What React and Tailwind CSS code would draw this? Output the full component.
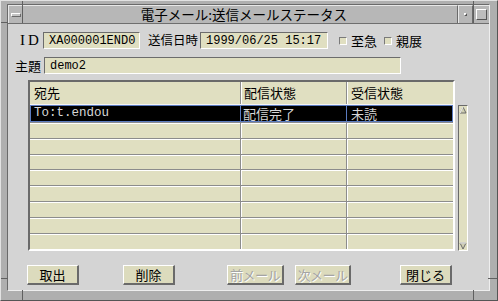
import React from "react";

const jp = "font-['Noto_Sans_CJK_JP',sans-serif]";
const mono = "font-['Liberation_Mono','Noto_Sans_CJK_JP',monospace]";

const rows = [
  { to: "To:t.endou", sent: "配信完了", read: "未読", selected: true },
  {}, {}, {}, {}, {}, {}, {}, {},
];

const Field = ({ className, children }) => (
  <div
    className={`h-[17px] bg-[#e0dfc1] border border-t-[#6c6c6c] border-l-[#6c6c6c] border-b-white border-r-white flex items-center pl-[5px] text-[12px] text-black whitespace-nowrap ${mono} ${className}`}
  >
    {children}
  </div>
);

const Check = () => (
  <div className="w-[8px] h-[8px] bg-[#e0dfc1] border border-t-[#7a7a7a] border-l-[#7a7a7a] border-b-white border-r-white" />
);

const Button = ({ className, disabled, children }) => (
  <div
    className={`h-[20px] bg-[#dcdbbd] border-t border-l border-t-white border-l-white border-b-2 border-r-2 border-b-[#6a6a6a] border-r-[#6a6a6a] flex items-center justify-center text-[13px] leading-none whitespace-nowrap ${jp} ${
      disabled ? "text-[#a4a4a4] [text-shadow:1px_1px_0_#ffffff] tracking-[-0.5px]" : "text-black"
    } ${className}`}
  >
    {children}
  </div>
);

export default function App() {
  return (
    <div className="relative w-[498px] h-[301px] bg-[#afafaf] border-t border-l border-t-[#e2e2e2] border-l-[#e2e2e2] border-b border-r border-b-[#555555] border-r-[#555555] pt-[3px] pl-[6px] pr-[7px] pb-[9px] overflow-hidden">
      {/* resize corner marks */}
      <div className="absolute left-[21px] top-0 w-px h-[22px] bg-[#606060]" />
      <div className="absolute left-0 top-[21px] w-[7px] h-px bg-[#606060]" />
      <div className="absolute left-[472px] top-0 w-px h-[22px] bg-[#606060]" />
      <div className="absolute left-[21px] bottom-0 w-px h-[10px] bg-[#606060]" />
      <div className="absolute left-0 top-[277px] w-[7px] h-px bg-[#606060]" />
      <div className="absolute left-[472px] bottom-0 w-px h-[10px] bg-[#606060]" />
      <div className="absolute right-0 top-[277px] w-[9px] h-px bg-[#606060]" />

      <div className="flex flex-col border border-t-[#6a6a6a] border-l-[#6a6a6a] border-b-[#eeeeee] border-r-[#eeeeee]">
        {/* title bar */}
        <div className="h-[19px] flex bg-[#b7b7b7] border-b border-b-[#6e6e6e]">
          <div className="w-[15px] h-full flex items-center justify-center border-t border-l border-t-[#e8e8e8] border-l-[#e8e8e8] border-r border-r-[#6a6a6a]">
            <div className="w-[10px] h-[4px] bg-[#c4c4c4] border-t border-l border-t-white border-l-white border-b border-r border-b-[#6a6a6a] border-r-[#6a6a6a]" />
          </div>
          <div
            className={`flex-1 h-full flex items-center justify-center pl-[8px] text-[13.5px] leading-none text-black whitespace-nowrap border-t border-t-[#e8e8e8] border-r border-r-[#6a6a6a] ${jp}`}
          >
            電子メール:送信メールステータス
          </div>
          <div className="w-[15px] h-full flex items-center justify-center border-t border-l border-t-[#e8e8e8] border-l-[#e8e8e8] border-r border-r-[#6a6a6a]">
            <div className="w-[3px] h-[3px] bg-[#d8d8d8] border-t border-l border-t-white border-l-white border-b border-r border-b-[#555555] border-r-[#555555]" />
          </div>
          <div className="w-[16px] h-full flex items-center justify-center border-t border-l border-t-[#e8e8e8] border-l-[#e8e8e8]">
            <div className="w-[11px] h-[11px] bg-[#bdbdbd] border-t border-l border-t-white border-l-white border-b border-r border-b-[#555555] border-r-[#555555]" />
          </div>
        </div>

        {/* client area */}
        <div className="h-[266px] bg-[#d4d4d4] flex flex-col">
          {/* row 1 */}
          <div className="mt-[8px] h-[17px] flex items-center">
            <span className="ml-[12px] w-[23px] text-[15px] leading-none text-black font-['Liberation_Serif',serif] tracking-[3px]">
              ID
            </span>
            <Field className="w-[97px]">XA000001END0</Field>
            <span className={`ml-[8px] w-[52px] text-[12.5px] leading-none text-black whitespace-nowrap ${jp}`}>
              送信日時
            </span>
            <Field className="w-[128px] text-[11px]">1999/06/25 15:17</Field>
            <div className="ml-[11px]">
              <Check />
            </div>
            <span className={`ml-[4px] text-[13px] leading-none text-black whitespace-nowrap ${jp}`}>至急</span>
            <div className="ml-[7px]">
              <Check />
            </div>
            <span className={`ml-[4px] text-[13px] leading-none text-black whitespace-nowrap ${jp}`}>親展</span>
          </div>

          {/* row 2 */}
          <div className="mt-[8px] h-[17px] flex items-center">
            <span className={`ml-[7px] w-[29px] text-[13px] leading-none text-black whitespace-nowrap ${jp}`}>主題</span>
            <Field className="w-[357px]">demo2</Field>
          </div>

          {/* table + scrollbar */}
          <div className="mt-[6px] flex">
            <div className="ml-[20px] w-[427px] h-[171px] bg-[#e0dfc1] border-2 border-t-[#6a6a6a] border-l-[#6a6a6a] border-b-white border-r-white flex flex-col">
              <div className={`h-[23px] flex text-[13px] leading-none text-black whitespace-nowrap border-b border-b-[#f4f4f4] ${jp}`}>
                <div className="w-[211px] pl-[4px] flex items-center border-r border-r-[#8c8c8c]">宛先</div>
                <div className="w-[106px] pl-[2px] flex items-center border-l border-l-white border-r border-r-[#8c8c8c]">
                  配信状態
                </div>
                <div className="flex-1 pl-[3px] flex items-center border-l border-l-white">受信状態</div>
              </div>
              {rows.map((r, i) =>
                r.selected ? (
                  <div
                    key={i}
                    className="h-[17px] flex bg-black border border-[#5b7bc0] text-[#d6d6d6] text-[13px] leading-none whitespace-nowrap"
                  >
                    <div className={`w-[210px] pl-[3px] flex items-center border-r border-r-[#5b7bc0] ${mono} text-[12.5px]`}>
                      {r.to}
                    </div>
                    <div className={`w-[106px] pl-[2px] flex items-center border-r border-r-[#5b7bc0] ${jp}`}>
                      {r.sent}
                    </div>
                    <div className={`flex-1 pl-[4px] flex items-center ${jp}`}>{r.read}</div>
                  </div>
                ) : (
                  <div key={i} className="h-[16px] flex border-t border-t-[#8c8c8c] shadow-[inset_0_1px_0_#ffffff]">
                    <div className="w-[211px] border-r border-r-[#8c8c8c]" />
                    <div className="w-[106px] border-l border-l-white border-r border-r-[#8c8c8c]" />
                    <div className="flex-1 border-l border-l-white" />
                  </div>
                )
              )}
            </div>

            {/* scrollbar */}
            <div className="ml-[3px] mt-[25px] w-[10px] h-[146px] bg-[#e0dfc1] border border-t-[#6a6a6a] border-l-[#6a6a6a] border-b-white border-r-white flex flex-col justify-between">
              <svg width="8" height="8" viewBox="0 0 8 8">
                <path d="M1 7 L4 1 L7 7 Z" fill="#d0cfb2" stroke="#6a6a6a" strokeWidth="1" />
                <path d="M4 1 L1 7" stroke="#ffffff" strokeWidth="1" />
              </svg>
              <svg width="8" height="8" viewBox="0 0 8 8">
                <path d="M1 1 L4 7 L7 1 Z" fill="#d0cfb2" stroke="#6a6a6a" strokeWidth="1" />
                <path d="M1 1 L7 1" stroke="#ffffff" strokeWidth="1" />
              </svg>
            </div>
          </div>

          {/* buttons */}
          <div className="mt-[14px] flex">
            <Button className="ml-[19px] w-[52px]">取出</Button>
            <Button className="ml-[44px] w-[52px]">削除</Button>
            <Button className="ml-[52px] w-[57px]" disabled>
              前メール
            </Button>
            <Button className="ml-[11px] w-[56px]" disabled>
              次メール
            </Button>
            <Button className="ml-[49px] w-[52px]">閉じる</Button>
          </div>
        </div>
      </div>
    </div>
  );
}
